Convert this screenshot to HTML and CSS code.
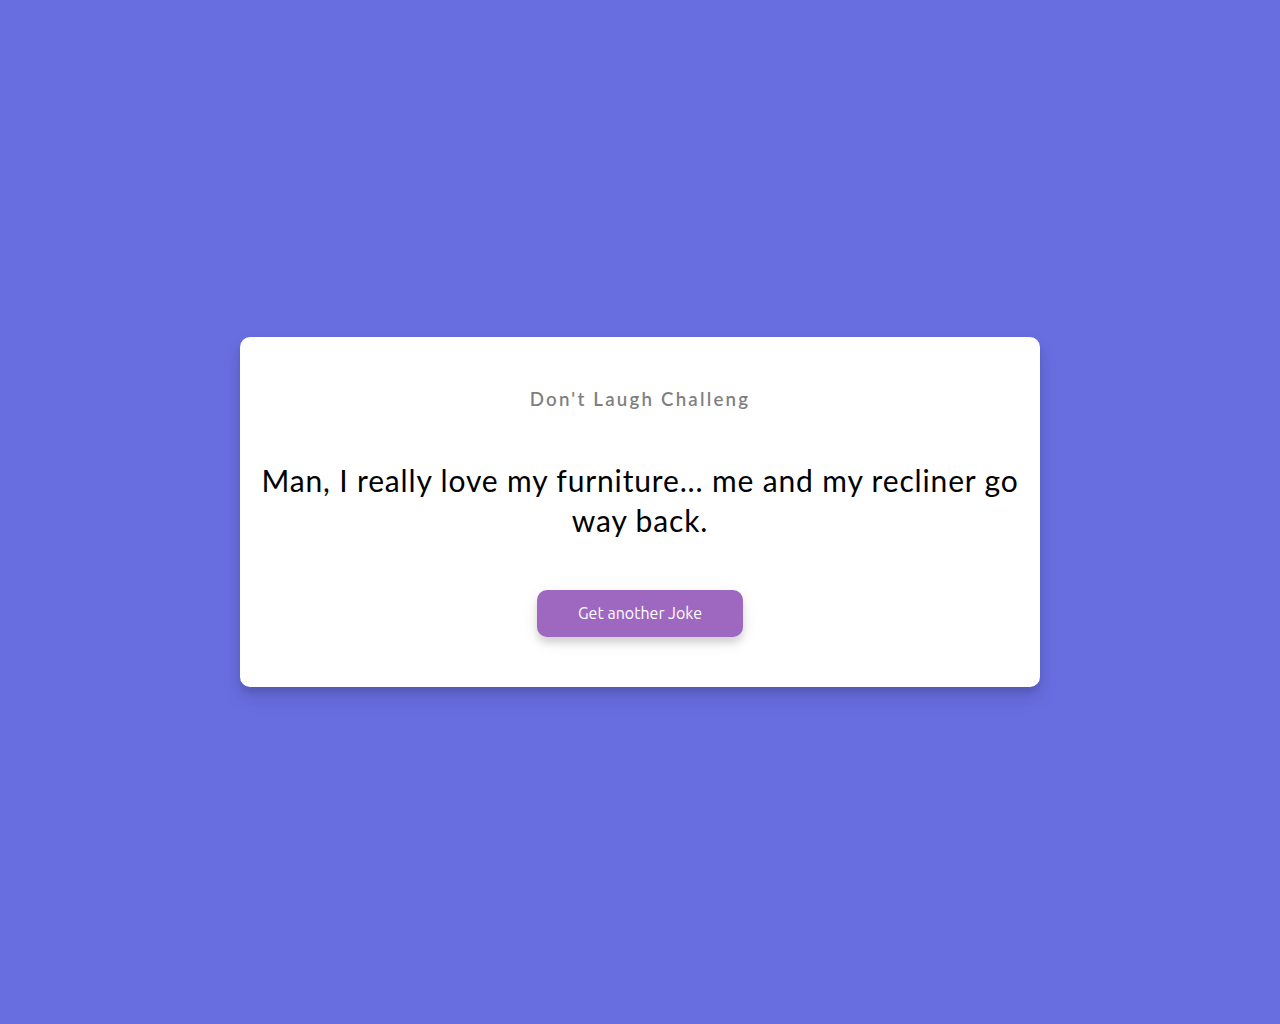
FILE: index.html
```html
<!DOCTYPE html>
<html lang="en">
<head>
<meta charset="UTF-8">
<title>Dad Jokes</title>
<link rel="stylesheet" href="styles.css">
</head>
<body>
<div class="container">
  <h3>Don't Laugh Challeng</h3>
  <div class="joke">Man, I really love my furniture... me and my recliner go way back.</div>
  <button class="btn">Get another Joke</button>
</div>
</body>
</html>
```
FILE: styles.css
```css
* { box-sizing: border-box; }

body {
  background-color: #686de0;
  font-family: Lato, "Noto Sans", sans-serif;
  display: flex;
  flex-direction: column;
  align-items: center;
  justify-content: center;
  height: 100vh;
  overflow: hidden;
  margin: 0;
  padding: 20px;
}

.container {
  background-color: #fff;
  border-radius: 10px;
  box-shadow: 0 10px 20px rgba(0, 0, 0, 0.1), 0 6px 6px rgba(0, 0, 0, 0.1);
  padding: 50px 20px;
  text-align: center;
  max-width: 100%;
  width: 800px;
}

h3 {
  margin: 0;
  padding-top: 1px;
  font-size: 18.72px;
  font-weight: 600;
  opacity: 0.5;
  letter-spacing: 2.2px;
  line-height: 22px;
}

.joke {
  font-size: 30px;
  letter-spacing: 0.85px;
  line-height: 40px;
  margin: 50px auto;
}

.btn {
  background-color: #9f68c0;
  color: #fff;
  border: 0;
  border-radius: 10px;
  box-shadow: 0 5px 15px rgba(0, 0, 0, 0.1), 0 6px 6px rgba(0, 0, 0, 0.1);
  padding: 14px 41px;
  font-family: Ubuntu, "Open Sans", sans-serif;
  font-size: 16px;
  line-height: 19px;
  cursor: pointer;
}
```
